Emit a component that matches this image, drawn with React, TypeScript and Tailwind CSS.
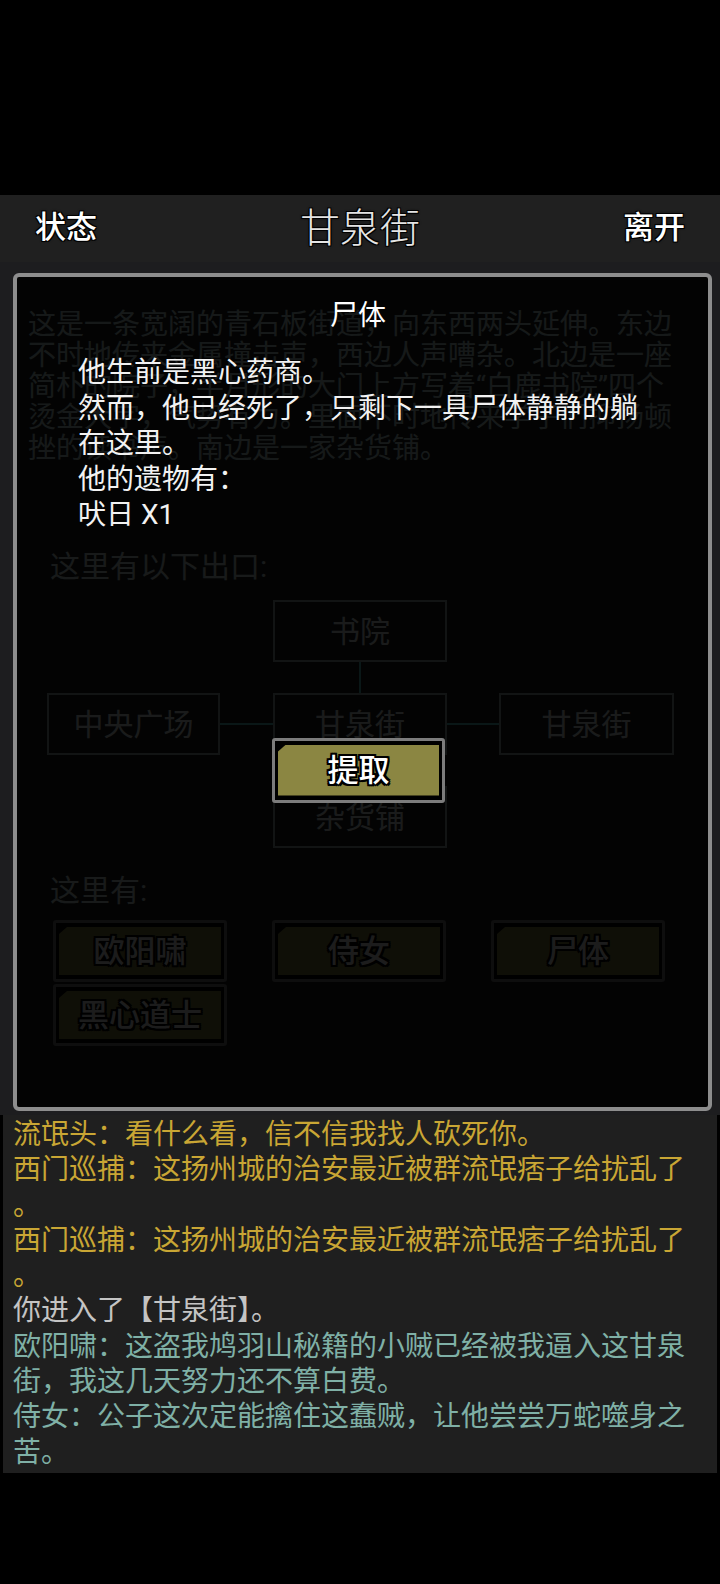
const outline =
  '[text-shadow:-1px_-1px_0_#000,1px_-1px_0_#000,-1px_1px_0_#000,1px_1px_0_#000,0_0_3px_#000]';

const thickOutline =
  '[text-shadow:-2px_-2px_0_#000,2px_-2px_0_#000,-2px_2px_0_#000,2px_2px_0_#000,0_2px_0_#000,0_-2px_0_#000,2px_0_0_#000,-2px_0_0_#000]';

const description = [
  '这是一条宽阔的青石板街道，向东西两头延伸。东边',
  '不时地传来金属撞击声，西边人声嘈杂。北边是一座',
  '简朴的院子，半月形的大门上方写着“白鹿书院”四个',
  '烫金大字，气势有力。里面不时地传来学子们抑扬顿',
  '挫的读书声。南边是一家杂货铺。',
];

const corpseLines = [
  '他生前是黑心药商。',
  '然而，他已经死了，只剩下一具尸体静静的躺',
  '在这里。',
  '他的遗物有：',
  '吠日 X1',
];

const gold = 'text-[#c9a634]';
const teal = 'text-[#7fb0a6]';
const grey = 'text-[#c4c4c4]';

const log: { text: string; color: string }[] = [
  { text: '流氓头：看什么看，信不信我找人砍死你。', color: gold },
  { text: '西门巡捕：这扬州城的治安最近被群流氓痞子给扰乱了', color: gold },
  { text: '。', color: gold },
  { text: '西门巡捕：这扬州城的治安最近被群流氓痞子给扰乱了', color: gold },
  { text: '。', color: gold },
  { text: '你进入了【甘泉街】。', color: grey },
  { text: '欧阳啸：这盗我鸠羽山秘籍的小贼已经被我逼入这甘泉', color: teal },
  { text: '街，我这几天努力还不算白费。', color: teal },
  { text: '侍女：公子这次定能擒住这蠢贼，让他尝尝万蛇噬身之', color: teal },
  { text: '苦。', color: teal },
];

function OliveButton({ label, className }: { label: string; className?: string }) {
  return (
    <div
      className={`rounded-[3px] border-[3px] border-[#7c7c7c] bg-black px-[3px] py-[4px] ${className ?? ''}`}
    >
      <div className="flex h-full items-center justify-center bg-[#8b8642] [clip-path:polygon(8px_0,100%_0,100%_100%,0_100%,0_7px)]">
        <span className={`text-[31px] font-medium leading-none text-white ${thickOutline}`}>{label}</span>
      </div>
    </div>
  );
}

function ExitBox({ label }: { label: string }) {
  return (
    <div className="flex h-[62px] items-center justify-center border-2 border-[#9fb3b3] text-[30px] text-[#e8f6f6]">
      {label}
    </div>
  );
}

function HLine() {
  return (
    <div className="flex items-center">
      <div className="h-[2px] w-full bg-[#5ad0d0]" />
    </div>
  );
}

function VLine() {
  return (
    <div className="flex justify-center">
      <div className="h-full w-[2px] bg-[#5ad0d0]" />
    </div>
  );
}

export default function App() {
  return (
    <div className="flex h-[1584px] w-[720px] flex-col bg-black font-['Roboto','Noto_Sans_CJK_SC',sans-serif]">
      <div className="h-[195px]" />

      <header className="flex h-[67px] items-center justify-between bg-[#202020] px-[35px] text-white">
        <span className={`text-[31px] font-medium ${outline}`}>状态</span>
        <span className={`text-[40px] font-light text-[#e4e4e4] ${outline}`}>甘泉街</span>
        <span className={`text-[31px] font-medium ${outline}`}>离开</span>
      </header>

      <main className="relative h-[853px] bg-[#1d1d1f]">
        <div className="px-[28px] pt-[47px]">
          <div className="text-[28px] leading-[31px] text-[#c8e4e4]">
            {description.map((l, i) => (
              <p key={i} className="whitespace-nowrap">
                {l}
              </p>
            ))}
          </div>

          <p className="ml-[22px] mt-[87px] text-[30px] leading-[31px] text-[#d4e6e6]">这里有以下出口:</p>

          <div className="ml-[19px] mt-[18px] grid grid-cols-[173px_53px_174px_52px_175px] grid-rows-[62px_31px_62px_31px_62px]">
            <div />
            <div />
            <ExitBox label="书院" />
            <div />
            <div />

            <div />
            <div />
            <VLine />
            <div />
            <div />

            <ExitBox label="中央广场" />
            <HLine />
            <ExitBox label="甘泉街" />
            <HLine />
            <ExitBox label="甘泉街" />

            <div />
            <div />
            <VLine />
            <div />
            <div />

            <div />
            <div />
            <ExitBox label="杂货铺" />
            <div />
            <div />
          </div>

          <p className="ml-[22px] mt-[27px] text-[30px] leading-[31px] text-[#d4e6e6]">这里有:</p>

          <div className="ml-[25px] mt-[14px] grid w-[612px] grid-cols-3 gap-x-[45px] gap-y-[2px]">
            <OliveButton label="欧阳啸" className="h-[62px]" />
            <OliveButton label="侍女" className="h-[62px]" />
            <OliveButton label="尸体" className="h-[62px]" />
            <OliveButton label="黑心道士" className="h-[62px]" />
          </div>
        </div>

        <div className="absolute left-[13px] top-[11px] flex h-[838px] w-[699px] flex-col rounded-[6px] border-[4px] border-[#8d8d8d] bg-black/[0.89]">
          <p className="pr-[9px] pt-[21px] text-center text-[28px] leading-[36px] text-white">尸体</p>
          <div className="mt-[21px] pl-[61px] text-[28px] leading-[35.5px] text-[#f2f2f2]">
            {corpseLines.map((l, i) => (
              <p key={i} className="whitespace-nowrap">
                {l}
              </p>
            ))}
          </div>
          <div className="mt-[205px] flex justify-center pr-[8px]">
            <OliveButton label="提取" className="h-[65px] w-[173px]" />
          </div>
        </div>
      </main>

      <section className="mx-[3px] h-[358px] bg-[#1f1f1f] px-[10px] pt-[2px] text-[28px] leading-[35.3px]">
        {log.map((l, i) => (
          <p key={i} className={`whitespace-nowrap ${l.color}`}>
            {l.text}
          </p>
        ))}
      </section>
    </div>
  );
}
